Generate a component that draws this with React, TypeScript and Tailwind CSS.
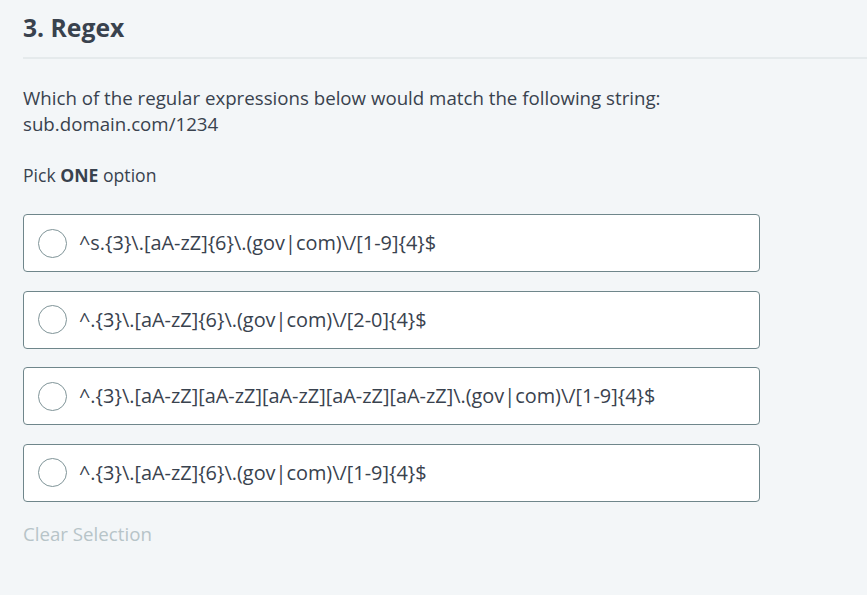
import React from 'react';

const options: string[] = [
  '^s.{3}\\.[aA-zZ]{6}\\.(gov|com)\\/[1-9]{4}$',
  '^.{3}\\.[aA-zZ]{6}\\.(gov|com)\\/[2-0]{4}$',
  '^.{3}\\.[aA-zZ][aA-zZ][aA-zZ][aA-zZ][aA-zZ]\\.(gov|com)\\/[1-9]{4}$',
  '^.{3}\\.[aA-zZ]{6}\\.(gov|com)\\/[1-9]{4}$',
];

const App: React.FC = () => {
  return (
    <div className="min-h-[595px] w-full overflow-hidden bg-[#f3f6f8] font-['Open_Sans',sans-serif] text-[#39424e]">
      <div className="pl-[23px]">
        <h1 className="pt-[11px] text-[24.7px] font-bold leading-[34px] text-[#39424e]">3. Regex</h1>
        <div className="mt-[12px] h-[2px] w-full bg-[#e5eaec]" />
        <p className="mt-[26px] text-[18.7px] leading-[26px]">
          Which of the regular expressions below would match the following string:
          <br />
          sub.domain.com/1234
        </p>
        <p className="mt-[26px] text-[17.6px] leading-[24px]">
          Pick <span className="font-bold">ONE</span> option
        </p>
        <div className="mt-[27px] flex w-[737px] flex-col gap-[18.67px]">
          {options.map((opt) => (
            <label
              key={opt}
              className="flex h-[58px] items-center rounded-[4px] border border-[#6f868b] bg-white pl-[14px]"
            >
              <span className="h-[29px] w-[29px] shrink-0 rounded-full border border-[#7f9498] bg-white" />
              <span className="ml-[12px] text-[19.9px] leading-[26px] text-[#39424e]">{opt}</span>
            </label>
          ))}
        </div>
        <div className="mt-[19px] text-[18.7px] leading-[26px] text-[#b7c4c8]">Clear Selection</div>
      </div>
    </div>
  );
};

export default App;
